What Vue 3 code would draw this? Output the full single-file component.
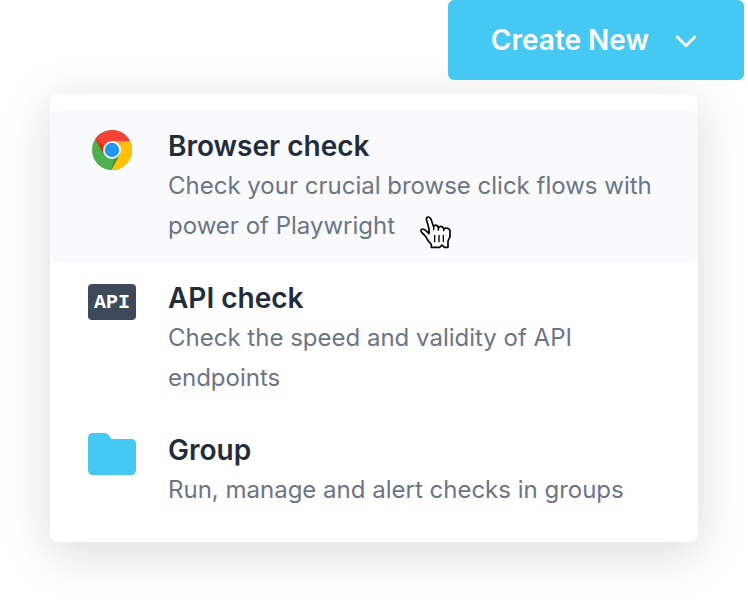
<script setup>
import { ref } from 'vue'

const items = [
  { id: 'browser', title: 'Browser check', text: 'Check your crucial browse click flows with power of Playwright' },
  { id: 'api', title: 'API check', text: 'Check the speed and validity of API endpoints' },
  { id: 'group', title: 'Group', text: 'Run, manage and alert checks in groups' },
]
const active = ref('browser')
</script>

<template>
  <main class="page">
    <button class="create" type="button" aria-haspopup="menu" aria-expanded="true">
      <span>Create New</span>
      <svg class="chevron" viewBox="0 0 24 24" aria-hidden="true">
        <path d="M3.2 9L12 17.8L20.8 9" />
      </svg>
    </button>
    <nav class="menu">
      <a
        v-for="item in items"
        :key="item.id"
        href="#"
        class="item"
        :class="{ active: active === item.id }"
        @mouseenter="active = item.id"
        @click.prevent
      >
        <span class="icon">
          <svg v-if="item.id === 'browser'" class="chrome" viewBox="0 0 40 40" aria-hidden="true">
            <circle cx="20" cy="20" r="20" fill="#4caf50" />
            <path d="M20 11H37.9A20 20 0 0 1 19.5 40L28 24Z" fill="#ffc107" />
            <path d="M3.4 9A20 20 0 0 1 37.9 11H20L12 24Z" fill="#f44336" />
            <path d="M3.4 9L14 17L11.4 23.5Z" fill="#dd2c00" />
            <path d="M19.5 40L22 28L27.8 24Z" fill="#558b2f" />
            <path d="M37.9 11H20L27 15Z" fill="#f9a825" />
            <circle cx="20" cy="20" r="9" fill="#fff" />
            <circle cx="20" cy="20" r="7.2" fill="#2196f3" />
          </svg>
          <span v-else-if="item.id === 'api'" class="badge">API</span>
          <svg v-else class="folder" viewBox="0 0 48 42" aria-hidden="true">
            <path d="M5 0H16C18 0 19.5 .8 20.7 2.3L23.5 6H43Q48 6 48 11V37Q48 42 43 42H5Q0 42 0 37V5Q0 0 5 0Z" />
          </svg>
        </span>
        <span class="copy">
          <strong class="title">{{ item.title }}</strong>
          <span class="text">{{ item.text }}</span>
        </span>
      </a>
      <svg class="pointer" viewBox="0 0 96 99" aria-hidden="true">
        <path
          class="hand"
          d="M34 94V85L24 74L17 61L5 49C1 44 3 39 8 39C14 39 18 44 24 50L27 53V39L20 13C18 7 20 3 25 3C29 3 31 5 33 10L41 33C42 26 52 25 55 34V37C58 29 68 29 71 38V40C74 34 87 35 90 43V62L84 75V94H73L66 87L59 94Z"
        />
        <path class="lines" d="M44 57V79M57 57V79M70 57V79M41 32V43M55 35V44M71 38V46" />
      </svg>
    </nav>
  </main>
</template>

<style>
body {
  background: #fff;
}
</style>

<style scoped>
.page {
  display: flex;
  flex-direction: column;
  gap: 14px;
  padding: 0 4px 60px 50px;
  font-family: Inter, "Liberation Sans", sans-serif;
}
.create {
  position: relative;
  z-index: 1;
  align-self: flex-end;
  display: flex;
  align-items: center;
  gap: 25px;
  height: 80px;
  padding: 0 46px 0 43px;
  border: 0;
  border-radius: 6px;
  background: #45c8f1;
  color: #fff;
  font-family: inherit;
  font-size: 28px;
  font-weight: 600;
  line-height: 40px;
  white-space: nowrap;
}
.chevron {
  width: 24px;
  height: 24px;
  fill: none;
  stroke: #fff;
  stroke-width: 2.8;
  stroke-linecap: round;
  stroke-linejoin: round;
}
.menu {
  position: relative;
  margin-right: 46px;
  padding: 16px 0;
  border-radius: 8px;
  background: #fff;
  box-shadow: 0 10px 50px rgba(0, 0, 0, 0.15);
}
.item {
  display: flex;
  gap: 32px;
  padding: 16px 38px;
  border-radius: 8px;
  color: inherit;
  text-decoration: none;
}
.item.active {
  background: #f9fafc;
}
.icon {
  flex: none;
  display: flex;
  align-items: center;
  justify-content: center;
  width: 48px;
  height: 48px;
}
.chrome {
  width: 40px;
  height: 40px;
}
.badge {
  width: 48px;
  padding-top: 2px;
  border-radius: 4px;
  background: #3e4a5b;
  color: #fff;
  font-family: "Liberation Mono", monospace;
  font-size: 20px;
  font-weight: 700;
  line-height: 34px;
  text-align: center;
}
.folder {
  width: 48px;
  height: 42px;
  fill: #45c8f1;
}
.copy {
  display: flex;
  flex-direction: column;
}
.title {
  color: #1f2d3d;
  font-size: 28px;
  font-weight: 600;
  line-height: 40px;
}
.text {
  color: #6b7585;
  font-size: 24px;
  line-height: 40px;
}
.pointer {
  position: absolute;
  top: 122px;
  left: 370px;
  width: 32px;
  height: 33px;
  pointer-events: none;
}
.hand {
  fill: #fff;
  stroke: #000;
  stroke-width: 5;
  stroke-linejoin: round;
}
.lines {
  fill: none;
  stroke: #000;
  stroke-width: 4;
}
</style>
